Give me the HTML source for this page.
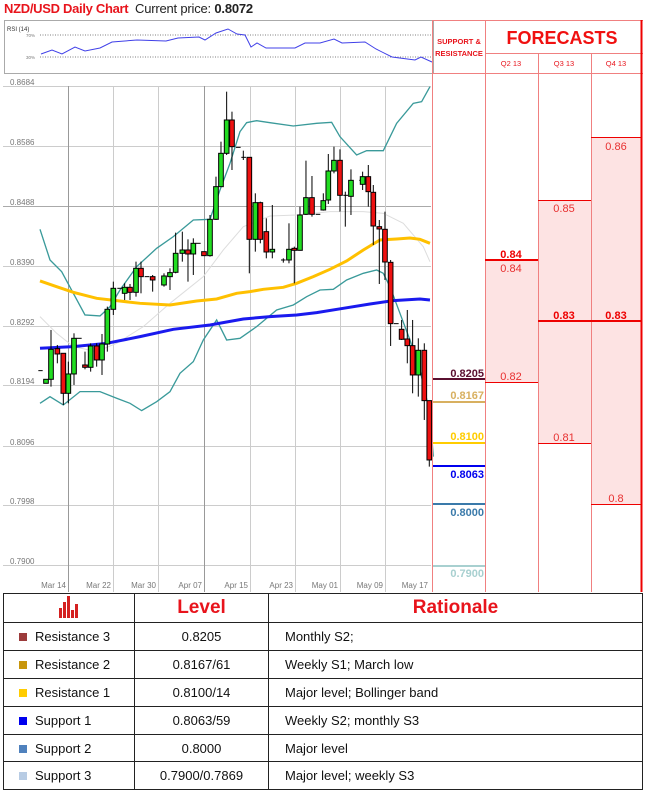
<!DOCTYPE html>
<html><head><meta charset="utf-8"><style>
body{margin:0;width:647px;height:793px;background:#fff;position:relative;overflow:hidden;font-family:"Liberation Sans",sans-serif}
.a{position:absolute}
table{border-collapse:collapse}
</style></head><body>
<div class="a" style="left:4px;top:1px;font-size:13px;font-weight:bold;color:#e8141c;letter-spacing:-0.3px">NZD/USD Daily Chart</div>
<div class="a" style="left:135px;top:1px;font-size:13px;color:#222;letter-spacing:-0.2px">Current price: <b>0.8072</b></div>

<svg class="a" style="left:0;top:0" width="647" height="593" viewBox="0 0 647 593">
<!-- RSI box -->
<rect x="4.5" y="20.5" width="429" height="53" fill="#fff" stroke="#aaa"/>
<text x="7" y="31" font-size="6" fill="#333" font-family="Liberation Sans">RSI (14)</text>
<text x="26" y="37" font-size="4.5" fill="#777" font-family="Liberation Sans">70%</text>
<text x="26" y="59" font-size="4.5" fill="#777" font-family="Liberation Sans">30%</text>
<line x1="40" y1="35" x2="431" y2="35" stroke="#555" stroke-dasharray="1,1.5" stroke-width="0.7"/>
<line x1="40" y1="57" x2="431" y2="57" stroke="#555" stroke-dasharray="1,1.5" stroke-width="0.7"/>
<polyline fill="none" stroke="#4040e8" stroke-width="1" points="41,54 52,50 62,54 75,47 85,51 100,48 112,42 137,40 166,41 178,38 199,37 205,40 216,33 228,29 237,34 245,35 251,47 257,43 266,48 295,48 305,43 320,43 334,39 342,43 365,42 376,49 392,57 415,60 421,57 432,62"/>
<!-- main chart grid -->
<g stroke="#ccc" stroke-width="1">
<line x1="3" y1="86.5" x2="431" y2="86.5"/><line x1="3" y1="146.5" x2="431" y2="146.5"/><line x1="3" y1="206.5" x2="431" y2="206.5" stroke="#aaa"/><line x1="3" y1="266.5" x2="431" y2="266.5"/><line x1="3" y1="326.5" x2="431" y2="326.5"/><line x1="3" y1="385.5" x2="431" y2="385.5"/><line x1="3" y1="446.5" x2="431" y2="446.5"/><line x1="3" y1="505.5" x2="431" y2="505.5"/><line x1="3" y1="565.5" x2="431" y2="565.5"/>
<line x1="68.5" y1="86" x2="68.5" y2="592" stroke="#999"/><line x1="113.5" y1="86" x2="113.5" y2="592"/><line x1="158.5" y1="86" x2="158.5" y2="592"/><line x1="204.5" y1="86" x2="204.5" y2="592" stroke="#999"/><line x1="250.5" y1="86" x2="250.5" y2="592"/><line x1="295.5" y1="86" x2="295.5" y2="592"/><line x1="340.5" y1="86" x2="340.5" y2="592"/><line x1="385.5" y1="86" x2="385.5" y2="592"/>
</g>
<g font-size="8" fill="#777" font-family="Liberation Sans">
<text x="10" y="85">0.8684</text><text x="10" y="145">0.8586</text><text x="10" y="205">0.8488</text><text x="10" y="265">0.8390</text><text x="10" y="325">0.8292</text><text x="10" y="384">0.8194</text><text x="10" y="445">0.8096</text><text x="10" y="504">0.7998</text><text x="10" y="564">0.7900</text>
<g text-anchor="end"><text x="66" y="588">Mar 14</text><text x="111" y="588">Mar 22</text><text x="156" y="588">Mar 30</text><text x="202" y="588">Apr 07</text><text x="248" y="588">Apr 15</text><text x="293" y="588">Apr 23</text><text x="338" y="588">May 01</text><text x="383" y="588">May 09</text><text x="428" y="588">May 17</text></g>
</g>
<g transform="translate(30,80) scale(0.3333)">
<polyline fill="none" stroke="#ddd" stroke-width="3" points="30,710 80,760 130,800 200,815 260,790 340,740 420,670 520,590 580,510 640,440 720,408 800,405 900,395 1000,395 1060,400 1120,430 1180,500 1200,545"/>
<polyline fill="none" stroke="#3a9a9a" stroke-width="4" points="30,448 60,540 95,575 130,640 165,705 210,708 240,680 270,630 320,560 380,505 430,470 490,420 540,418 570,330 600,250 630,155 650,128 680,122 720,128 790,138 860,130 905,127 930,170 980,225 1010,212 1060,212 1100,130 1150,70 1175,65 1200,20"/>
<polyline fill="none" stroke="#3a9a9a" stroke-width="4" points="30,970 60,950 100,975 150,935 210,935 260,955 300,970 335,992 380,965 420,935 450,880 490,845 520,780 560,720 590,780 630,775 680,740 740,690 790,675 830,650 870,630 910,628 950,600 1000,580 1040,570 1060,580 1080,620 1110,700 1140,780 1170,870 1200,1000 1210,1130"/>
<polyline fill="none" stroke="#ffc000" stroke-width="9" points="30,603 80,620 130,637 200,655 260,662 330,670 420,675 500,663 560,657 620,640 660,635 700,628 760,622 800,610 850,590 900,568 950,543 1000,510 1050,480 1100,477 1140,474 1170,478 1200,490"/>
<polyline fill="none" stroke="#1a1aee" stroke-width="9" points="30,805 130,800 230,790 330,770 430,748 540,735 640,717 720,710 800,705 860,698 940,685 1020,672 1090,662 1170,657 1200,660"/>
<g stroke="#000" stroke-width="3">
<line x1="63" y1="750" x2="63" y2="920"/><line x1="100" y1="820" x2="100" y2="975"/><line x1="115" y1="845" x2="115" y2="970"/><line x1="132" y1="760" x2="132" y2="915"/><line x1="82" y1="795" x2="82" y2="850"/><line x1="165" y1="815" x2="165" y2="868"/><line x1="182" y1="790" x2="182" y2="875"/><line x1="200" y1="790" x2="200" y2="860"/><line x1="216" y1="762" x2="216" y2="885"/><line x1="232" y1="680" x2="232" y2="815"/><line x1="250" y1="605" x2="250" y2="705"/><line x1="284" y1="610" x2="284" y2="660"/><line x1="300" y1="612" x2="300" y2="660"/><line x1="318" y1="545" x2="318" y2="650"/><line x1="333" y1="545" x2="333" y2="640"/><line x1="368" y1="585" x2="368" y2="635"/><line x1="402" y1="580" x2="402" y2="620"/><line x1="420" y1="565" x2="420" y2="630"/><line x1="437" y1="458" x2="437" y2="580"/><line x1="457" y1="455" x2="457" y2="545"/><line x1="474" y1="478" x2="474" y2="605"/><line x1="490" y1="475" x2="490" y2="585"/><line x1="540" y1="405" x2="540" y2="530"/><line x1="558" y1="290" x2="558" y2="420"/><line x1="573" y1="185" x2="573" y2="320"/><line x1="590" y1="35" x2="590" y2="225"/><line x1="606" y1="95" x2="606" y2="270"/><line x1="640" y1="212" x2="640" y2="240"/><line x1="658" y1="232" x2="658" y2="580"/><line x1="676" y1="340" x2="676" y2="515"/><line x1="691" y1="365" x2="691" y2="490"/><line x1="709" y1="415" x2="709" y2="535"/><line x1="727" y1="375" x2="727" y2="535"/><line x1="760" y1="535" x2="760" y2="548"/><line x1="777" y1="430" x2="777" y2="550"/><line x1="793" y1="500" x2="793" y2="610"/><line x1="810" y1="380" x2="810" y2="512"/><line x1="828" y1="242" x2="828" y2="405"/><line x1="846" y1="288" x2="846" y2="410"/><line x1="880" y1="340" x2="880" y2="392"/><line x1="895" y1="222" x2="895" y2="372"/><line x1="912" y1="200" x2="912" y2="280"/><line x1="930" y1="208" x2="930" y2="395"/><line x1="946" y1="335" x2="946" y2="440"/><line x1="963" y1="268" x2="963" y2="405"/><line x1="998" y1="275" x2="998" y2="330"/><line x1="1015" y1="255" x2="1015" y2="380"/><line x1="1030" y1="315" x2="1030" y2="495"/><line x1="1048" y1="420" x2="1048" y2="612"/><line x1="1065" y1="395" x2="1065" y2="600"/><line x1="1082" y1="540" x2="1082" y2="798"/><line x1="1115" y1="720" x2="1115" y2="780"/><line x1="1132" y1="690" x2="1132" y2="850"/><line x1="1148" y1="720" x2="1148" y2="940"/><line x1="1165" y1="775" x2="1165" y2="950"/><line x1="1183" y1="790" x2="1183" y2="1020"/><line x1="1198" y1="962" x2="1198" y2="1160"/>
<line x1="25" y1="872" x2="38" y2="872"/><line x1="140" y1="775" x2="155" y2="775"/><line x1="262" y1="625" x2="276" y2="625"/><line x1="344" y1="590" x2="358" y2="590"/><line x1="498" y1="490" x2="512" y2="490"/><line x1="618" y1="202" x2="632" y2="202"/><line x1="634" y1="232" x2="648" y2="232"/><line x1="753" y1="540" x2="767" y2="540"/><line x1="857" y1="403" x2="871" y2="403"/><line x1="940" y1="346" x2="954" y2="346"/><line x1="988" y1="301" x2="1002" y2="301"/><line x1="1092" y1="731" x2="1106" y2="731"/>
</g>
<g stroke="#000" stroke-width="3">
<g fill="#22dd22">
<rect x="41" y="898" width="14" height="12"/><rect x="56" y="808" width="14" height="90"/><rect x="108" y="882" width="14" height="58"/><rect x="125" y="775" width="14" height="107"/><rect x="175" y="798" width="14" height="64"/><rect x="209" y="792" width="14" height="48"/><rect x="225" y="688" width="14" height="104"/><rect x="243" y="625" width="14" height="63"/><rect x="277" y="622" width="14" height="18"/><rect x="311" y="565" width="14" height="72"/><rect x="395" y="588" width="14" height="27"/><rect x="413" y="578" width="14" height="12"/><rect x="430" y="520" width="14" height="57"/><rect x="450" y="510" width="14" height="10"/><rect x="483" y="490" width="14" height="32"/><rect x="533" y="418" width="14" height="109"/><rect x="551" y="320" width="14" height="98"/><rect x="566" y="220" width="14" height="100"/><rect x="583" y="120" width="14" height="100"/><rect x="669" y="368" width="14" height="110"/><rect x="720" y="508" width="14" height="8"/><rect x="770" y="508" width="14" height="32"/><rect x="803" y="405" width="14" height="106"/><rect x="821" y="353" width="14" height="50"/><rect x="873" y="362" width="14" height="28"/><rect x="888" y="273" width="14" height="87"/><rect x="905" y="241" width="14" height="32"/><rect x="956" y="301" width="14" height="48"/><rect x="991" y="290" width="14" height="23"/><rect x="1158" y="811" width="14" height="74"/>
</g>
<g fill="#ee1111">
<rect x="75" y="806" width="14" height="16"/><rect x="93" y="820" width="14" height="120"/><rect x="158" y="855" width="14" height="7"/><rect x="193" y="798" width="14" height="42"/><rect x="293" y="622" width="14" height="15"/><rect x="326" y="565" width="14" height="25"/><rect x="361" y="590" width="14" height="10"/><rect x="467" y="510" width="14" height="12"/><rect x="515" y="515" width="14" height="12"/><rect x="599" y="120" width="14" height="80"/><rect x="651" y="232" width="14" height="246"/><rect x="684" y="368" width="14" height="110"/><rect x="702" y="455" width="14" height="61"/><rect x="786" y="505" width="14" height="6"/><rect x="839" y="353" width="14" height="50"/><rect x="923" y="241" width="14" height="105"/><rect x="1008" y="290" width="14" height="45"/><rect x="1023" y="337" width="14" height="101"/><rect x="1041" y="440" width="14" height="7"/><rect x="1058" y="448" width="14" height="98"/><rect x="1075" y="547" width="14" height="184"/><rect x="1108" y="748" width="14" height="30"/><rect x="1125" y="777" width="14" height="20"/><rect x="1141" y="797" width="14" height="88"/><rect x="1176" y="811" width="14" height="151"/><rect x="1191" y="962" width="14" height="178"/>
</g></g>
</g>
<!-- right forecast panel -->
<rect x="485" y="260" width="53" height="122" fill="#fde3e3"/>
<rect x="538" y="200" width="53" height="243" fill="#fde3e3"/>
<rect x="591" y="137" width="51" height="367" fill="#fde3e3"/>
<g stroke="#f08080" stroke-width="1" fill="none">
<line x1="432.5" y1="20" x2="432.5" y2="592"/><line x1="485.5" y1="20" x2="485.5" y2="592"/><line x1="538.5" y1="53" x2="538.5" y2="592"/><line x1="591.5" y1="53" x2="591.5" y2="592"/>
<line x1="432" y1="20.5" x2="643" y2="20.5"/><line x1="485" y1="53.5" x2="643" y2="53.5"/><line x1="432" y1="73.5" x2="643" y2="73.5"/>
</g>
<line x1="641.5" y1="20" x2="641.5" y2="592" stroke="#e00" stroke-width="2"/>
<text x="459" y="44" font-size="7.5" font-weight="bold" fill="#e8141c" text-anchor="middle" font-family="Liberation Sans">SUPPORT &amp;</text>
<text x="459" y="56" font-size="7.5" font-weight="bold" fill="#e8141c" text-anchor="middle" font-family="Liberation Sans">RESISTANCE</text>
<text x="562" y="44" font-size="18" font-weight="bold" fill="#f01010" text-anchor="middle" font-family="Liberation Sans">FORECASTS</text>
<g font-size="7.5" fill="#e8141c" text-anchor="middle" font-family="Liberation Sans"><text x="511" y="66">Q2 13</text><text x="564" y="66">Q3 13</text><text x="616" y="66">Q4 13</text></g>
<g stroke-width="2">
<line x1="433" y1="379" x2="485" y2="379" stroke="#5a1030"/>
<line x1="433" y1="402" x2="485" y2="402" stroke="#d8b060"/>
<line x1="433" y1="443" x2="485" y2="443" stroke="#ffcc00"/>
<line x1="433" y1="466" x2="485" y2="466" stroke="#0000ee"/>
<line x1="433" y1="504" x2="485" y2="504" stroke="#3a7aaa"/>
<line x1="433" y1="566" x2="485" y2="566" stroke="#a8d0d0"/>
<line x1="485" y1="260" x2="538" y2="260" stroke="#e00"/>
<line x1="538" y1="321" x2="642" y2="321" stroke="#e00"/>
</g>
<g stroke="#e00" stroke-width="1"><line x1="485" y1="382.5" x2="538" y2="382.5"/><line x1="538" y1="443.5" x2="591" y2="443.5"/><line x1="538" y1="200.5" x2="591" y2="200.5"/><line x1="591" y1="137.5" x2="642" y2="137.5"/><line x1="591" y1="504.5" x2="642" y2="504.5"/></g>
<g font-size="11" font-weight="bold" text-anchor="end" font-family="Liberation Sans">
<text x="484" y="377" fill="#5a1030">0.8205</text><text x="484" y="399" fill="#d8b060">0.8167</text><text x="484" y="440" fill="#ffcc00">0.8100</text><text x="484" y="478" fill="#0000ee">0.8063</text><text x="484" y="516" fill="#3a7aaa">0.8000</text><text x="484" y="577" fill="#a8d0d0">0.7900</text>
</g>
<g font-size="11" text-anchor="middle" fill="#e83030" font-family="Liberation Sans">
<text x="511" y="258" font-weight="bold" fill="#e00">0.84</text><text x="511" y="272">0.84</text><text x="511" y="380">0.82</text>
<text x="564" y="319" font-weight="bold" fill="#e00">0.83</text><text x="564" y="441">0.81</text><text x="564" y="212">0.85</text>
<text x="616" y="319" font-weight="bold" fill="#e00">0.83</text><text x="616" y="502">0.8</text><text x="616" y="150">0.86</text>
</g>
</svg>

<table class="a" style="left:3px;top:593px;width:640px;font-size:13px;color:#111">
<colgroup><col style="width:131px"><col style="width:134px"><col></colgroup>
<tr style="height:29px"><td style="border:1px solid #222;text-align:center"><svg width="24" height="22" viewBox="0 0 24 22"><g fill="#d42020"><rect x="2" y="12" width="3" height="10"/><rect x="6" y="6" width="3" height="16"/><rect x="10" y="0" width="3" height="22"/><rect x="14" y="14" width="3" height="8"/><rect x="18" y="8" width="3" height="14"/></g></svg></td><td style="border:1px solid #222;text-align:center;font-size:19px;font-weight:bold;color:#e8141c">Level</td><td style="border:1px solid #222;text-align:center;font-size:19px;font-weight:bold;color:#e8141c">Rationale</td></tr>
<tr style="height:28px"><td style="border:1px solid #222;padding-left:15px"><span style="display:inline-block;width:8px;height:8px;background:#9c3b3b;margin-right:8px"></span>Resistance 3</td><td style="border:1px solid #222;text-align:center">0.8205</td><td style="border:1px solid #222;padding-left:16px">Monthly S2;</td></tr>
<tr style="height:28px"><td style="border:1px solid #222;padding-left:15px"><span style="display:inline-block;width:8px;height:8px;background:#c8960c;margin-right:8px"></span>Resistance 2</td><td style="border:1px solid #222;text-align:center">0.8167/61</td><td style="border:1px solid #222;padding-left:16px">Weekly S1; March low</td></tr>
<tr style="height:28px"><td style="border:1px solid #222;padding-left:15px"><span style="display:inline-block;width:8px;height:8px;background:#ffcc00;margin-right:8px"></span>Resistance 1</td><td style="border:1px solid #222;text-align:center">0.8100/14</td><td style="border:1px solid #222;padding-left:16px">Major level; Bollinger band</td></tr>
<tr style="height:28px"><td style="border:1px solid #222;padding-left:15px"><span style="display:inline-block;width:8px;height:8px;background:#0000ee;margin-right:8px"></span>Support 1</td><td style="border:1px solid #222;text-align:center">0.8063/59</td><td style="border:1px solid #222;padding-left:16px">Weekly S2; monthly S3</td></tr>
<tr style="height:27px"><td style="border:1px solid #222;padding-left:15px"><span style="display:inline-block;width:8px;height:8px;background:#4f81bd;margin-right:8px"></span>Support 2</td><td style="border:1px solid #222;text-align:center">0.8000</td><td style="border:1px solid #222;padding-left:16px">Major level</td></tr>
<tr style="height:28px"><td style="border:1px solid #222;padding-left:15px"><span style="display:inline-block;width:8px;height:8px;background:#b8cce4;margin-right:8px"></span>Support 3</td><td style="border:1px solid #222;text-align:center">0.7900/0.7869</td><td style="border:1px solid #222;padding-left:16px">Major level; weekly S3</td></tr>
</table>
</body></html>
